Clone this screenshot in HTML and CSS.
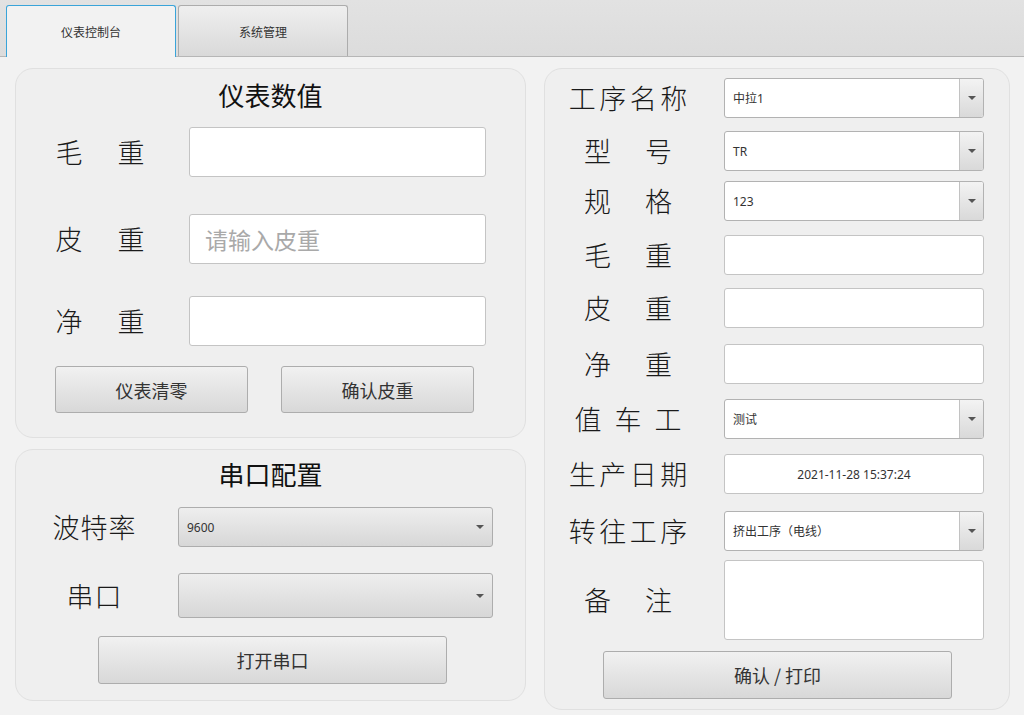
FILE: index.html
```html
<!DOCTYPE html>
<html lang="zh-CN">
<head>
<meta charset="utf-8">
<title>仪表控制台</title>
<link rel="stylesheet" href="styles.css">
</head>
<body>
<div class="tabbar">
  <div class="tab tab-active">仪表控制台</div>
  <div class="tab">系统管理</div>
</div>
<div class="content">
  <div class="col-left">
    <section class="panel panel-meter">
      <h2 class="panel-title">仪表数值</h2>
      <div class="frow mrow-1"><span class="lbl lbl-left">毛　重</span><input class="inp inp-left" type="text"></div>
      <div class="frow mrow-2"><span class="lbl lbl-left">皮　重</span><input class="inp inp-left" type="text" placeholder="请输入皮重"></div>
      <div class="frow mrow-3"><span class="lbl lbl-left">净　重</span><input class="inp inp-left" type="text"></div>
      <div class="btnrow">
        <button class="btn btn-half">仪表清零</button>
        <button class="btn btn-half">确认皮重</button>
      </div>
    </section>
    <section class="panel panel-serial">
      <h2 class="panel-title">串口配置</h2>
      <div class="frow srow-1"><span class="lbl lbl-serial">波特率</span><div class="combo combo-grad combo-h40"><span class="combo-text">9600</span><span class="arrow"></span></div></div>
      <div class="frow srow-2"><span class="lbl lbl-serial">串口</span><div class="combo combo-grad combo-h45"><span class="combo-text"></span><span class="arrow"></span></div></div>
      <div class="btnrow btnrow-serial">
        <button class="btn btn-open">打开串口</button>
      </div>
    </section>
  </div>
  <section class="panel panel-right">
    <div class="frow rrow rr-1"><span class="lbl lbl-right">工序名称</span><div class="combo combo-white"><span class="combo-text">中拉1</span><span class="arrow-box"><span class="arrow"></span></span></div></div>
    <div class="frow rrow rr-2"><span class="lbl lbl-right">型　号</span><div class="combo combo-white"><span class="combo-text">TR</span><span class="arrow-box"><span class="arrow"></span></span></div></div>
    <div class="frow rrow rr-3"><span class="lbl lbl-right">规　格</span><div class="combo combo-white"><span class="combo-text">123</span><span class="arrow-box"><span class="arrow"></span></span></div></div>
    <div class="frow rrow rr-4"><span class="lbl lbl-right">毛　重</span><input class="inp inp-right" type="text"></div>
    <div class="frow rrow rr-5"><span class="lbl lbl-right">皮　重</span><input class="inp inp-right" type="text"></div>
    <div class="frow rrow rr-6"><span class="lbl lbl-right">净　重</span><input class="inp inp-right" type="text"></div>
    <div class="frow rrow rr-7"><span class="lbl lbl-right">值 车 工</span><div class="combo combo-white"><span class="combo-text">测试</span><span class="arrow-box"><span class="arrow"></span></span></div></div>
    <div class="frow rrow rr-8"><span class="lbl lbl-right">生产日期</span><div class="inp inp-right inp-date">2021-11-28 15:37:24</div></div>
    <div class="frow rrow rr-9"><span class="lbl lbl-right">转往工序</span><div class="combo combo-white"><span class="combo-text">挤出工序（电线）</span><span class="arrow-box"><span class="arrow"></span></span></div></div>
    <div class="frow rrow rr-10"><span class="lbl lbl-right">备　注</span><textarea class="inp inp-right inp-note"></textarea></div>
    <div class="btnrow btnrow-right">
      <button class="btn btn-print">确认 / 打印</button>
    </div>
  </section>
</div>
</body>
</html>
```

FILE: styles.css
```css
* { box-sizing: border-box; }

html, body {
  margin: 0;
  padding: 0;
}

body {
  width: 1024px;
  height: 715px;
  overflow: hidden;
  background: #f2f2f2;
  font-family: "Noto Sans CJK SC", "Noto Sans", sans-serif;
  color: #222;
}

/* ---------- tab bar ---------- */
.tabbar {
  height: 57px;
  display: flex;
  align-items: flex-end;
  gap: 2px;
  padding-left: 6px;
  background: linear-gradient(#e2e2e2, #dcdcdc);
  border-bottom: 1px solid #b6b6b6;
}

.tab {
  width: 170px;
  height: 51px;
  display: flex;
  align-items: center;
  justify-content: center;
  font-size: 12px;
  color: #333;
  border: 1px solid #acacac;
  border-bottom: none;
  border-radius: 3px 3px 0 0;
  background: linear-gradient(#efefef, #d9d9d9);
}

.tab-active {
  height: 52px;
  margin-bottom: -1px;
  position: relative;
  z-index: 1;
  background: #f2f2f2;
  border-color: #3aa4d9;
}

/* ---------- content ---------- */
.content {
  display: flex;
  gap: 18px;
  padding: 11px 0 0 15px;
}

.col-left {
  width: 511px;
  display: flex;
  flex-direction: column;
  gap: 11px;
}

.panel {
  background: #efefef;
  border: 1px solid #e0e0e0;
  border-radius: 18px;
}

.panel-meter {
  height: 370px;
  padding: 9px 0 0 0;
}

.panel-serial {
  height: 252px;
  padding: 7px 0 0 0;
}

.panel-right {
  width: 466px;
  height: 642px;
  padding: 9px 0 0 10px;
}

.panel-title {
  margin: 0;
  text-align: center;
  font-size: 26px;
  line-height: 34px;
  font-weight: 400;
  color: #111;
}

/* ---------- form rows ---------- */
.frow {
  display: flex;
  align-items: center;
}

.lbl {
  flex: none;
  text-align: center;
  font-size: 27px;
  line-height: 34px;
  font-weight: 300;
  color: #1a1a1a;
  white-space: pre;
}

.lbl-left {
  width: 130px;
  margin-left: 19px;
  margin-right: 24px;
  letter-spacing: 4px;
  padding-left: 4px;
}

.mrow-1 { margin-top: 15px; }
.mrow-2 { margin-top: 37px; }
.mrow-3 { margin-top: 32px; }

.inp {
  display: block;
  margin: 0;
  background: #fff;
  border: 1px solid #c4c4c4;
  border-radius: 3px;
  outline: none;
  font-family: inherit;
  color: #222;
}

.inp-left {
  width: 297px;
  height: 50px;
  padding: 0 15px;
  font-size: 23px;
}

.inp-left::placeholder {
  color: #a9a9a9;
}

/* serial */
.lbl-serial {
  width: 130px;
  margin-left: 13px;
  margin-right: 19px;
  letter-spacing: 1px;
  padding-left: 1px;
}

.srow-1 { margin-top: 16px; }
.srow-2 { margin-top: 26px; }

.combo {
  display: flex;
  align-items: center;
  border: 1px solid #b2b2b2;
  border-radius: 3px;
  font-size: 12px;
  font-family: "Noto Sans", "Noto Sans CJK SC", sans-serif;
  color: #333;
}

.combo-text {
  flex: 1;
  padding-left: 8px;
  white-space: nowrap;
}

.combo-grad {
  width: 315px;
  background: linear-gradient(#eeeeee, #d7d7d7);
  border-color: #adadad;
  padding-right: 8px;
}

.combo-h40 { height: 40px; }
.combo-h45 { height: 45px; }

.arrow {
  width: 0;
  height: 0;
  border-left: 4px solid transparent;
  border-right: 4px solid transparent;
  border-top: 4px solid #555;
}

.combo-white {
  width: 260px;
  height: 40px;
  background: #fff;
}

.arrow-box {
  width: 24px;
  align-self: stretch;
  display: flex;
  align-items: center;
  justify-content: center;
  border-left: 1px solid #c2c2c2;
  border-radius: 0 2px 2px 0;
  background: linear-gradient(#f3f3f3, #d9d9d9);
}

/* buttons */
.btnrow {
  display: flex;
}

.btn {
  margin: 0;
  padding: 0;
  font-family: inherit;
  font-size: 18px;
  color: #333;
  background: linear-gradient(#f1f1f1, #d8d8d8);
  border: 1px solid #adadad;
  border-radius: 3px;
}

.panel-meter .btnrow {
  margin-top: 20px;
  padding-left: 39px;
  gap: 33px;
}

.btn-half {
  width: 193px;
  height: 47px;
}

.btnrow-serial {
  margin-top: 18px;
  padding-left: 82px;
}

.btn-open {
  width: 349px;
  height: 48px;
}

/* right panel */
.lbl-right {
  width: 146px;
  margin-right: 23px;
  letter-spacing: 3.5px;
  padding-left: 3.5px;
}

.inp-right {
  width: 260px;
  height: 40px;
}

.inp-date {
  display: flex;
  align-items: center;
  justify-content: center;
  font-family: "Noto Sans", "Noto Sans CJK SC", sans-serif;
  font-size: 12px;
  color: #333;
}

.inp-note {
  height: 80px;
  resize: none;
}

.rr-1 { margin-top: 0; }
.rr-2 { margin-top: 13px; }
.rr-3 { margin-top: 10px; }
.rr-4 { margin-top: 14px; }
.rr-5 { margin-top: 13px; }
.rr-6 { margin-top: 16px; }
.rr-7 { margin-top: 15px; }
.rr-8 { margin-top: 15px; }
.rr-9 { margin-top: 17px; }
.rr-10 { margin-top: 9px; }

.btnrow-right {
  margin-top: 11px;
  padding-left: 48px;
}

.btn-print {
  width: 349px;
  height: 48px;
}
```
